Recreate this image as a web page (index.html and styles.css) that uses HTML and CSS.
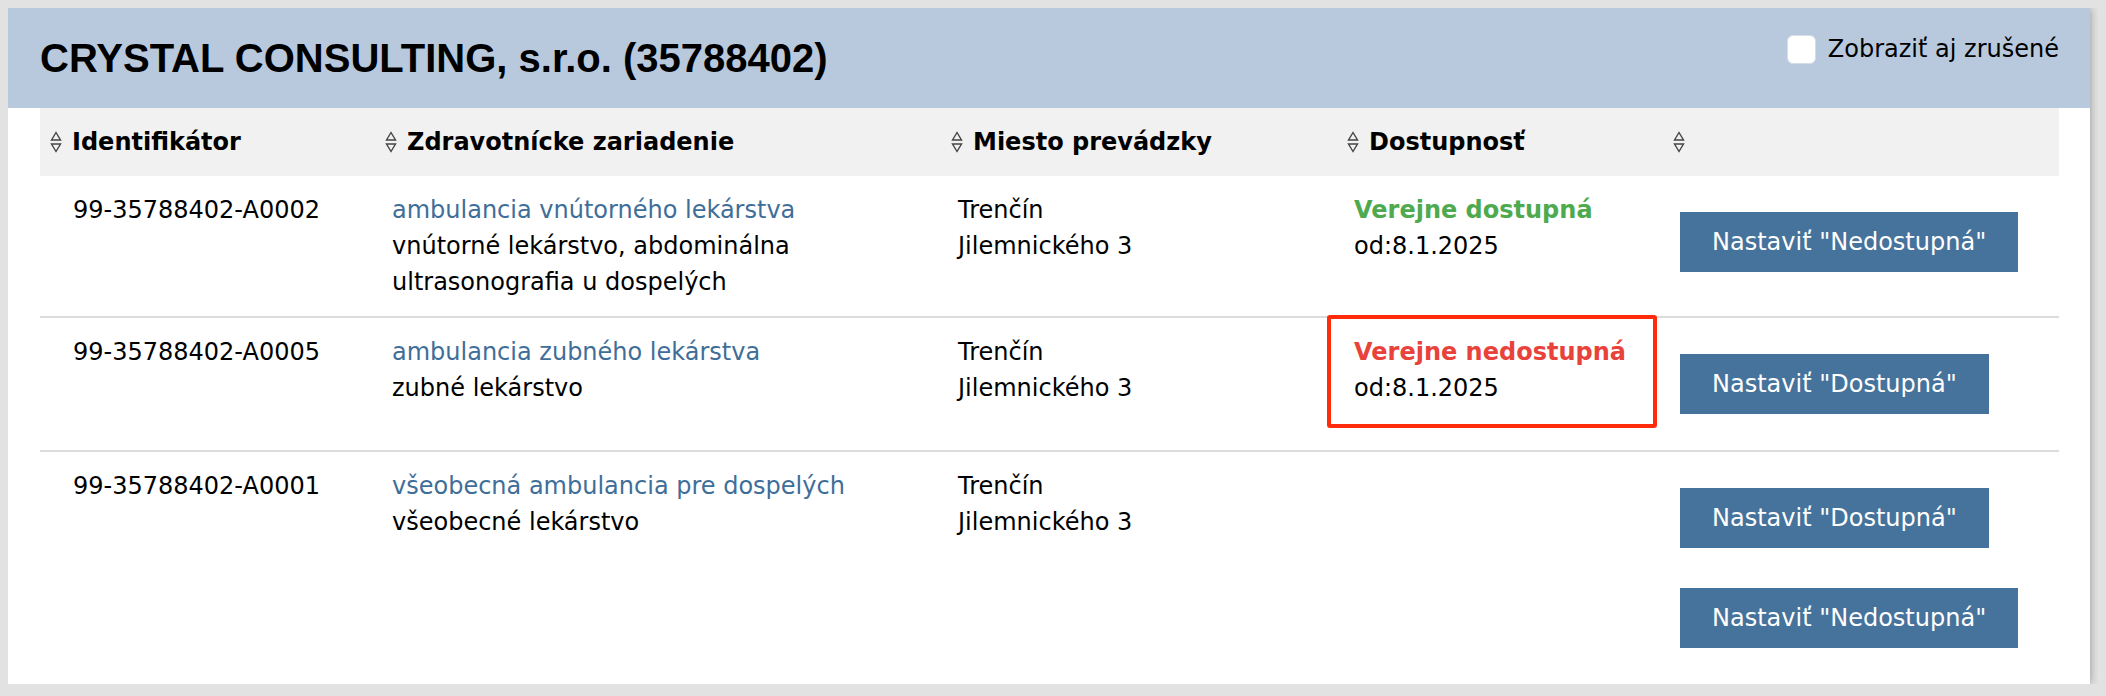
FILE: index.html
```html
<!DOCTYPE html>
<html lang="sk">
<head>
  <meta charset="UTF-8">
  <meta name="viewport" content="width=device-width, initial-scale=1.0">
  <title>Zariadenia poskytovateľa</title>
  <link rel="stylesheet" href="styles.css">
</head>
<body>
  <div class="card">
    <!-- Hlavička s názvom poskytovateľa -->
    <div class="card-head">
      <h1>CRYSTAL CONSULTING, s.r.o. (35788402)</h1>
      <label class="toggle"><input type="checkbox"> Zobraziť aj zrušené</label>
    </div>

    <table class="units">
      <thead>
        <tr>
          <th class="col-id"><svg class="sort" viewBox="0 0 12 24"><path d="M1.5 10 L6 2.5 L10.5 10 Z"/><path d="M1.5 14 L10.5 14 L6 21.5 Z"/></svg>Identifikátor</th>
          <th class="col-name"><svg class="sort" viewBox="0 0 12 24"><path d="M1.5 10 L6 2.5 L10.5 10 Z"/><path d="M1.5 14 L10.5 14 L6 21.5 Z"/></svg>Zdravotnícke zariadenie</th>
          <th class="col-place"><svg class="sort" viewBox="0 0 12 24"><path d="M1.5 10 L6 2.5 L10.5 10 Z"/><path d="M1.5 14 L10.5 14 L6 21.5 Z"/></svg>Miesto prevádzky</th>
          <th class="col-state"><svg class="sort" viewBox="0 0 12 24"><path d="M1.5 10 L6 2.5 L10.5 10 Z"/><path d="M1.5 14 L10.5 14 L6 21.5 Z"/></svg>Dostupnosť</th>
          <th class="col-act"><svg class="sort" viewBox="0 0 12 24"><path d="M1.5 10 L6 2.5 L10.5 10 Z"/><path d="M1.5 14 L10.5 14 L6 21.5 Z"/></svg></th>
        </tr>
      </thead>
      <tbody>
        <tr>
          <td class="col-id">99-35788402-A0002</td>
          <td><a href="#">ambulancia vnútorného lekárstva</a><br>vnútorné lekárstvo, abdominálna ultrasonografia u dospelých</td>
          <td>Trenčín<br>Jilemnického 3</td>
          <td><span class="state on">Verejne dostupná</span><br>od:8.1.2025</td>
          <td class="actions"><div class="btn-list"><button class="btn">Nastaviť "Nedostupná"</button></div></td>
        </tr>
        <tr>
          <td class="col-id">99-35788402-A0005</td>
          <td><a href="#">ambulancia zubného lekárstva</a><br>zubné lekárstvo</td>
          <td>Trenčín<br>Jilemnického 3</td>
          <td><span class="state off">Verejne nedostupná</span><br>od:8.1.2025</td>
          <td class="actions"><div class="btn-list"><button class="btn">Nastaviť "Dostupná"</button></div></td>
        </tr>
        <tr>
          <td class="col-id">99-35788402-A0001</td>
          <td><a href="#">všeobecná ambulancia pre dospelých</a><br>všeobecné lekárstvo</td>
          <td>Trenčín<br>Jilemnického 3</td>
          <td></td>
          <td class="actions">
            <div class="btn-list">
              <button class="btn">Nastaviť "Dostupná"</button>
              <button class="btn">Nastaviť "Nedostupná"</button>
            </div>
          </td>
        </tr>
      </tbody>
    </table>

    <!-- Červené zvýraznenie stavu -->
    <div class="mark"></div>
  </div>
</body>
</html>
```

FILE: styles.css
```css
body {
  margin: 8px;
  background-color: #e2e2e2;
  font-family: "DejaVu Sans", Verdana, sans-serif;
  font-size: 24px;
  line-height: 36px;
  color: #000;
}
.card {
  position: relative;
  width: 2082px;
  background: #fff;
  box-shadow: 0 0 9px rgba(0, 0, 0, 0.35);
}
.card-head {
  display: flex;
  justify-content: space-between;
  align-items: center;
  height: 100px;
  padding: 0 31px 0 32px;
  background-color: #b8c9de;
}
.card-head h1 {
  margin: 0;
  font-family: "Liberation Sans", Arial, sans-serif;
  font-size: 40px;
  line-height: 1;
  font-weight: bold;
}
.toggle {
  align-self: flex-start;
  margin-top: 23px;
  display: flex;
  align-items: center;
  gap: 12px;
}
.toggle input {
  appearance: none;
  margin: 0;
  width: 29px;
  height: 29px;
  border-radius: 6px;
  background: #fff;
  border: 1px solid #d6dde6;
}
.units {
  width: 2019px;
  margin: 0 31px 0 32px;
  border-collapse: collapse;
  table-layout: fixed;
}
.units th,
.units td {
  box-sizing: border-box;
}
.units th {
  background-color: #f1f1f1;
  text-align: left;
  font-weight: bold;
  padding: 16px 0 16px 1px;
  white-space: nowrap;
}
.units th.col-id {
  padding-left: 10px;
}
.sort {
  width: 12px;
  height: 24px;
  margin-right: 10px;
  vertical-align: -4px;
  fill: none;
  stroke: #444;
  stroke-width: 1.4;
}
.units td {
  vertical-align: top;
  padding: 16px 8px;
}
.units td.col-id {
  padding-left: 33px;
}
.units tbody tr + tr td {
  border-top: 2px solid #dcdcdc;
}
.col-id { width: 344px; }
.col-name { width: 566px; }
.col-place { width: 396px; }
.col-state { width: 326px; }
.units a {
  color: #3f6e98;
  text-decoration: none;
}
.state {
  font-weight: bold;
}
.state.on { color: #4faa4f; }
.state.off { color: #e8423a; }
.btn-list {
  display: flex;
  flex-direction: column;
  align-items: flex-start;
  gap: 40px;
  padding: 20px 0;
}
.btn {
  padding: 12px 32px;
  border: none;
  border-radius: 0;
  background-color: #46739b;
  color: #fff;
  font-family: "DejaVu Sans", Verdana, sans-serif;
  font-size: 24px;
  line-height: 36px;
  white-space: nowrap;
  cursor: pointer;
}
.btn:hover {
  background-color: #3a6286;
}
.mark {
  position: absolute;
  left: 1319px;
  top: 307px;
  width: 322px;
  height: 105px;
  border: 4px solid #ff2b0a;
  border-radius: 3px;
}
```
